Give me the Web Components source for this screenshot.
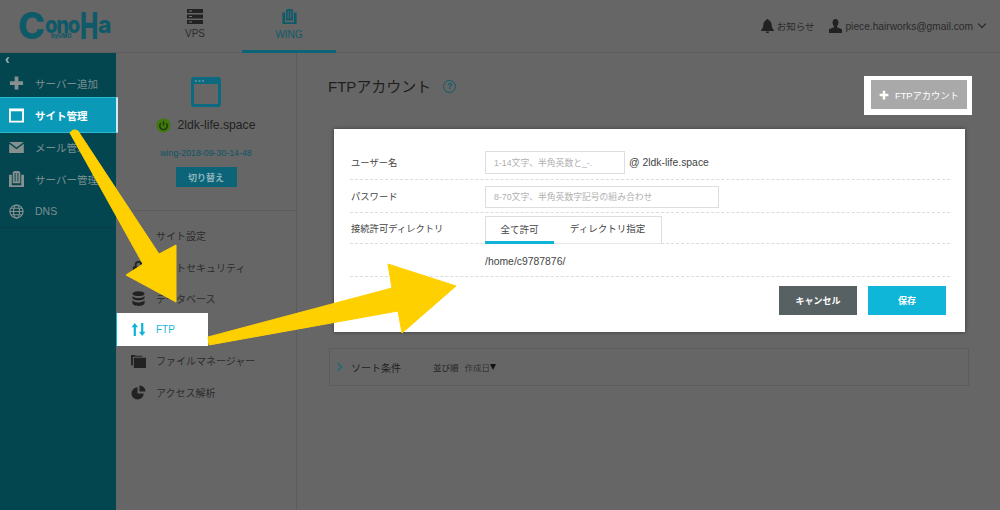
<!DOCTYPE html>
<html lang="ja"><head><meta charset="utf-8"><title>FTP</title>
<style>
html,body{margin:0;padding:0;background:#666;overflow:hidden}
body{font-family:"Liberation Sans","Noto Sans CJK JP",sans-serif}
</style></head><body>
<cp-app></cp-app>
<script>
const I={
plus:'<svg viewBox="0 0 16 16" width="16" height="16"><path fill="currentColor" d="M6 1h4v5h5v4h-5v5H6v-5H1V6h5z"/></svg>',
site:'<svg viewBox="0 0 16 16" width="15" height="15"><path fill="none" stroke="currentColor" stroke-width="2" d="M1 1.5h14v13H1z"/><path fill="currentColor" d="M1 1h14v2.500H1z"/></svg>',
mail:'<svg viewBox="0 0 16 12" width="15" height="11"><path fill="currentColor" d="M0 0h16L8 6zM0 2l8 6 8-6v10H0z"/></svg>',
server:'<svg viewBox="0 0 16 18" width="15" height="17"><path fill="currentColor" d="M5 0h6v1h1v12H4V1h1zM6 2v9h1V2zm3 0v9h1V2zM0 4h3v11h10V4h3v13H0z"/></svg>',
globe:'<svg viewBox="0 0 16 16" width="15" height="15" fill="none" stroke="currentColor" stroke-width="1.2"><circle cx="8" cy="8" r="7"/><ellipse cx="8" cy="8" rx="3.2" ry="7"/><path d="M1 8h14M2 4.500h12M2 11.500h12"/></svg>',
gear:'<svg viewBox="0 0 16 16" width="15" height="15"><circle cx="8" cy="8" r="5" fill="none" stroke="currentColor" stroke-width="4"/></svg>',
lock:'<svg viewBox="0 0 16 16" width="15" height="15"><path fill="currentColor" d="M2 7h12v8H2zM4 7V5a4 4 0 0 1 8 0v2h-2V5a2 2 0 0 0-4 0v2z"/></svg>',
db:'<svg viewBox="0 0 14 16" width="13" height="15"><g fill="currentColor"><ellipse cx="7" cy="2.800" rx="6.500" ry="2.600"/><path d="M.5 5.200c1 1.600 3.500 2.200 6.500 2.200s5.500-.6 6.500-2.200v2.600c-1 1.600-3.500 2.200-6.500 2.200S1.500 9.400.5 7.800z"/><path d="M.5 10c1 1.600 3.500 2.200 6.500 2.200s5.500-.6 6.500-2.200v3.200C13.500 15 10 16 7 16s-6.500-1-6.500-2.800z"/></g></svg>',
ftp:'<svg viewBox="0 0 16 14" width="15" height="13"><path fill="currentColor" d="M4 0l3.500 4.500H5.200V14H2.800V4.500H.5zM12 14l-3.500-4.500h2.300V0h2.400v9.500h2.300z"/></svg>',
folder:'<svg viewBox="0 0 16 15" width="15" height="14"><path fill="currentColor" d="M0 1h4l1 1h7v1H2v9H0zM3 4h13v11H3z"/></svg>',
pie:'<svg viewBox="0 0 16 16" width="15" height="15"><path fill="currentColor" d="M7 2.500V9h6.500A6.500 6.500 0 1 1 7 2.500zM9 .5A6.500 6.500 0 0 1 15.500 7H9z"/></svg>',
win:'<svg viewBox="0 0 30 30" width="30" height="30"><rect x="1.500" y="1.500" width="27" height="27" rx="1.500" fill="none" stroke="#0c6a80" stroke-width="3"/><path fill="#0c6a80" d="M1 1h28v6H1z"/><path fill="#4a8c9c" d="M4 3h2v2H4zM7.500 3h2v2h-2zM11 3h2v2h-2z"/></svg>',
power:'<svg viewBox="0 0 16 16" width="15" height="15"><circle cx="8" cy="8" r="7.500" fill="#3d7a0a"/><path fill="none" stroke="#1f2f10" stroke-width="1.400" d="M5.200 5.500a4 4 0 1 0 5.600 0M8 3.500V8"/></svg>',
vps:'<svg viewBox="0 0 16 15" width="16" height="15"><path fill="#222" d="M0 0h16v4H0zM0 5.500h16v4H0zM0 11h16v4H0z"/><path fill="#777" d="M2 1.500h3v1H2zM2 7h3v1H2zM2 12.500h3v1H2z"/></svg>',
bell:'<svg viewBox="0 0 14 15" width="13" height="14"><path fill="#222" d="M7 0c1 0 1.300.7 1.300 1.300C10.600 2 11.300 4 11.500 6.500c.2 2.500.8 4 2.500 5.500v1H0v-1c1.700-1.500 2.300-3 2.500-5.500C2.700 4 3.400 2 5.700 1.300 5.700.7 6 0 7 0zM5.300 13.500h3.400A1.700 1.700 0 0 1 5.300 13.500z"/></svg>',
user:'<svg viewBox="0 0 14 15" width="13" height="14"><path fill="#222" d="M7 0c2 0 3.200 1.500 3.200 3.800 0 1.700-.7 3-1.500 3.800v1.200L14 11v4H0v-4l5.300-2.200V7.600C4.500 6.800 3.800 5.500 3.800 3.800 3.800 1.500 5 0 7 0z"/></svg>'
};
function def(name,css,html){
  customElements.define(name,class extends HTMLElement{
    constructor(){super();const r=this.attachShadow({mode:'open'});
      const a=k=>this.getAttribute(k)||'';
      r.innerHTML='<style>'+css+'</style>'+(typeof html==='function'?html(a):html);}
  });
}
def('cp-logo',`:host{display:flex;align-items:baseline;width:116px;color:#0e5a69;position:relative;line-height:1;font-family:"Inter","Liberation Sans",sans-serif;box-sizing:border-box;padding:7px 0 0 18px;height:52px;overflow:hidden}
span{display:inline-block;flex:none;transform-origin:0 100%;white-space:nowrap}
.c{width:27px;font-size:37px;font-weight:800;transform:scaleX(.98)}
.o{width:35px;font-size:24px;font-weight:800;letter-spacing:-1.500px;transform:translateY(-6px) scaleX(.84)}
.h{width:18px;font-size:37px;font-weight:800;transform:scaleX(.66)}
.a{width:16px;font-size:24px;font-weight:800;transform:translateY(-6px) scaleX(.95)}
.g{position:absolute;left:51px;top:34px;font-size:5.500px;font-weight:800;color:#0e5a69}`,
`<span class="c">C</span><span class="o">ono</span><span class="h">H</span><span class="a">a</span><span class="g">byGMO</span>`);
def('cp-tab',`:host{display:flex;flex-direction:column;align-items:center;width:94px;box-sizing:border-box;padding-top:9px;height:53px;gap:4px;font-size:10px;color:#2c2c2c;border-bottom:3px solid transparent}
:host([active]){color:#0e5a69;border-bottom-color:#0c6478}svg{display:block}`,
a=>`${a('icon')==='wing'?I.server.replace('currentColor','#0e5a69').replace('width="15" height="17"','width="15" height="16"'):I.vps}<slot></slot>`);
def('cp-header',`:host{display:flex;height:53px;box-sizing:border-box;border-bottom:1px solid #5e5e5e;align-items:flex-start;font-size:10px;color:#2a2a2a}
.tabs{display:flex;margin-left:32px}.r{margin-left:auto;display:flex;align-items:center;gap:15px;height:52px;padding-right:15px;font-size:10.200px}
.i{display:flex;align-items:center;gap:3px}.chev{width:5px;height:5px;border:solid #222;border-width:0 1.500px 1.500px 0;transform:rotate(45deg);margin:-4px 0 0 3px}`,
`<cp-logo></cp-logo><div class="tabs"><cp-tab icon="vps">VPS</cp-tab><cp-tab icon="wing" active>WING</cp-tab></div>
<div class="r"><div class="i">${I.bell}<span style="font-size:9.500px">お知らせ</span></div><div class="i">${I.user}<span>piece.hairworks@gmail.com</span><i class="chev"></i></div></div>`);
def('cp-side-item',`:host{display:flex;align-items:center;height:32px;padding-left:9px;gap:11px;font-size:10.500px;color:#7b8f92;box-sizing:border-box}
.ic{width:15px;display:flex;justify-content:center;color:#86908f}
:host([active]){height:36px;margin:-2px -2px -2px 0;background:#0a9ab8;color:#fff;font-weight:700;border-top:1px solid #2bb8d3;border-bottom:1px solid #2bb8d3;border-right:2px solid #cfe9ee;position:relative;z-index:2}
:host([active]) .ic{color:#fff}`,
a=>`<span class="ic">${I[a('icon')]}</span><slot></slot>`);
def('cp-sidebar',`:host{display:block;width:116px;flex:none;background:#03464f}
.b{height:14px;color:#9fb2b4;font-size:14px;font-weight:700;padding-left:5px;line-height:12px;font-family:"Liberation Sans"}
.l{border-bottom:1px solid #0a3c44}`,
`<div class="l"><div class="b">‹</div>
<cp-side-item icon="plus">サーバー追加</cp-side-item>
<cp-side-item icon="site" active>サイト管理</cp-side-item>
<cp-side-item icon="mail">メール管理</cp-side-item>
<cp-side-item icon="server">サーバー管理</cp-side-item>
<cp-side-item icon="globe">DNS</cp-side-item></div>`);
def('cp-sub-item',`:host{display:flex;align-items:center;height:31.400px;padding-left:15px;gap:10px;font-size:10px;color:#2c2c2c;box-sizing:border-box}
.ic{width:15px;display:flex;justify-content:center;color:#222}
:host([active]){width:92px;height:33px;margin:-1px 0;background:#fff;color:#19b5d8;border-left:1px solid #10b3d6;padding-left:14px;position:relative;z-index:2}
:host([active]) .ic{color:#10b3d6}`,
a=>`<span class="ic">${I[a('icon')]}</span><slot></slot>`);
def('cp-subnav',`:host{display:block;width:181px;flex:none;border-right:1px solid #5c5c5c;box-sizing:border-box}
.top{height:158px;border-bottom:1px solid #5c5c5c;display:flex;flex-direction:column;align-items:center;padding-top:24px;box-sizing:border-box}
.n{display:flex;align-items:center;gap:7px;font-size:12.200px;color:#222;margin-top:10px;height:16px;margin-left:-1px}
.w{font-size:8.800px;color:#0d5566;margin-top:15px;height:12px}
.btn{width:61px;height:20px;margin-top:7px;background:#0c6478;color:#8db4bc;font-size:9px;font-weight:700;display:flex;align-items:center;justify-content:center}
.list{padding-top:9px}`,
`<div class="top">${I.win}<div class="n">${I.power}<span>2ldk-life.space</span></div><div class="w">wing-2018-09-30-14-48</div><div class="btn">切り替え</div></div>
<div class="list"><cp-sub-item icon="gear">サイト設定</cp-sub-item><cp-sub-item icon="lock">サイトセキュリティ</cp-sub-item><cp-sub-item icon="db">データベース</cp-sub-item><cp-sub-item icon="ftp" active>FTP</cp-sub-item><cp-sub-item icon="folder">ファイルマネージャー</cp-sub-item><cp-sub-item icon="pie">アクセス解析</cp-sub-item></div>`);
def('cp-row',`:host{display:flex;align-items:center;box-sizing:border-box;border-bottom:1px dashed #dcdcdc;font-size:9.300px;color:#444}
.l{width:134px;flex:none;padding-left:1px}.c{display:flex;align-items:center;flex:1}`,
a=>`<div class="l">${a('label')}</div><div class="c"><slot></slot></div>`);
def('cp-input',`:host{display:flex;align-items:center;box-sizing:border-box;height:23px;border:1px solid #dedede;padding-left:8px;font-size:8.800px;color:#b0b0b0;background:#fff}`,`<slot></slot>`);
def('cp-tabs',`:host{display:flex;box-sizing:border-box;width:177px;height:28px;border:1px solid #dedede;border-bottom-color:#e8e8e8;font-size:9.500px;color:#444}
div{display:flex;align-items:center;justify-content:center;box-sizing:border-box}
.a{width:69px;border-bottom:3px solid #10b3d6;margin:0 0 -1px -1px}.b{flex:1;padding-bottom:3px}`,
`<div class="a">全て許可</div><div class="b">ディレクトリ指定</div>`);
def('cp-btn',`:host{display:flex;align-items:center;justify-content:center;width:78px;height:29px;background:#10b6d8;color:#fff;font-size:9px;font-weight:700}
:host([dark]){background:#576063}`,`<slot></slot>`);
def('cp-modal',`:host{display:block;width:631px;height:203px;background:#fff;margin-left:37px;box-shadow:0 0 4px rgba(0,0,0,.45);box-sizing:border-box;padding:16px 15px 0 16px;position:relative;z-index:2;color:#444}
.at{margin-left:4px;font-size:10.400px;color:#444}.f{display:flex;justify-content:flex-end;gap:11px;margin-top:9px;padding-right:4px}
.path{font-size:10.400px;color:#444;margin-top:2px}`,
`<cp-row label="ユーザー名" style="height:35px"><cp-input style="width:140px;margin-top:1px">1-14文字、半角英数と_-.</cp-input><span class="at">@ 2ldk-life.space</span></cp-row>
<cp-row label="パスワード" style="height:33px"><cp-input style="width:234px;height:22px;margin-top:1px">8-70文字、半角英数字記号の組み合わせ</cp-input></cp-row>
<cp-row label="接続許可ディレクトリ" style="height:31px"><cp-tabs style="margin-top:3px"></cp-tabs></cp-row>
<cp-row style="height:33px"><span class="path">/home/c9787876/</span></cp-row>
<div class="f"><cp-btn dark>キャンセル</cp-btn><cp-btn>保存</cp-btn></div>`);
def('cp-main',`:host{display:block;flex:1;min-width:0}
.h{display:flex;align-items:flex-start;height:76px;padding:23px 28px 0 31px;box-sizing:border-box}
h1{font-weight:400;font-size:15px;letter-spacing:0;color:#1f1f1f;margin:0;line-height:22px}
.q{width:11px;height:11px;border:1.500px solid #0e5a69;border-radius:50%;margin:4px 0 0 12px;font-size:9px;line-height:11px;text-align:center;color:#0e5a69;font-weight:700}
.hl{margin-left:auto;background:#fff;padding:4px 5px 6px 7px;height:29px;width:96px;margin-top:0;display:flex;box-sizing:content-box;position:relative;z-index:2}
.add{flex:1;background:#a9a9a9;color:#fff;font-size:9.300px;display:flex;align-items:center;justify-content:center;gap:6px}
.add svg{width:10px;height:10px}
.sort{margin:16px 31px 0 32px;height:38px;box-sizing:border-box;border:1px solid #5c5c5c;display:flex;align-items:center;padding-left:5px;font-size:10px;color:#222}
.ch{width:5px;height:5px;border:solid #0c6a80;border-width:1.500px 1.500px 0 0;transform:rotate(45deg);margin-right:10px}
.v{font-size:8.500px;margin-left:32px}.d{font-size:8.500px;margin-left:6px;color:#333;display:flex;align-items:center}.d b{width:0;height:0;border:solid transparent;border-width:6px 3.500px 0;border-top-color:#111}`,
`<div class="h"><h1>FTPアカウント</h1><div class="q">?</div><div class="hl"><div class="add">${I.plus}<span>FTPアカウント</span></div></div></div>
<cp-modal></cp-modal>
<div class="sort"><i class="ch"></i><span>ソート条件</span><span class="v">並び順</span><span class="d">作成日<b></b></span></div>`);
def('cp-arrows',`:host{position:absolute;left:0;top:0;width:1000px;height:510px;z-index:5;pointer-events:none}svg{display:block}`,
`<svg width="1000" height="510" viewBox="0 0 1000 510"><g fill="#ffd000" stroke="#ffd000" stroke-linejoin="round" stroke-width="1">
<path d="M70 133Q73 128 78 131L159 254 176 245V302L126 275 143 264z"/>
<path d="M208 337L392 288 388 264 456 286 402 333 398 311 209 345z"/></g></svg>`);
def('cp-app',`:host{display:flex;flex-direction:column;width:1000px;height:510px;position:relative;overflow:hidden;background:#666}
.b{display:flex;flex:1;min-height:0}`,
`<cp-header></cp-header><div class="b"><cp-sidebar></cp-sidebar><cp-subnav></cp-subnav><cp-main></cp-main></div><cp-arrows></cp-arrows>`);
</script></body></html>
